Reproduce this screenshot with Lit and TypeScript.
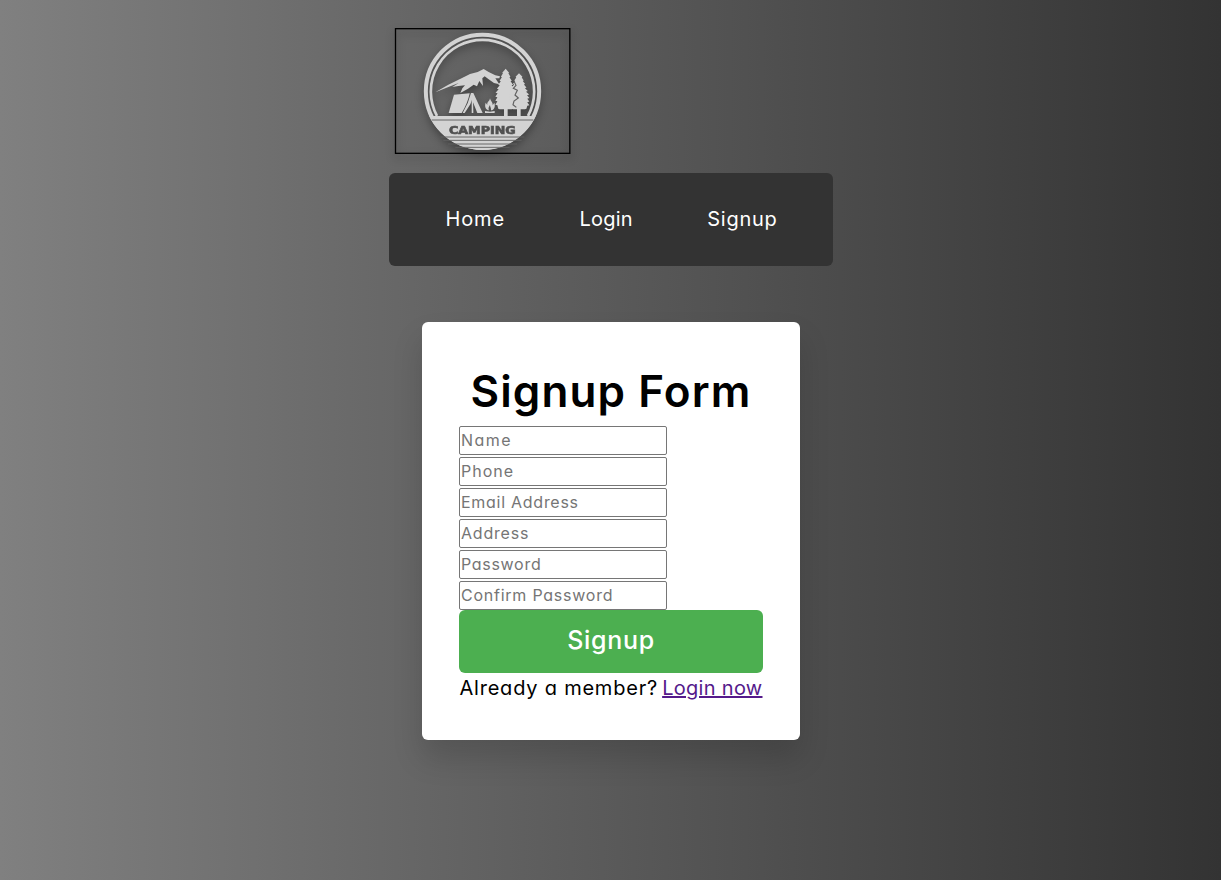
import { LitElement, html, css } from "lit";
import { customElement } from "lit/decorators.js";
import { styleMap } from "lit/directives/style-map.js";

@customElement("camp-logo")
class CampLogo extends LitElement {
  static styles = css`
    :host { display: block; width: 176px; height: 126px; }
    .art { display: block; width: 176px; height: 126px; overflow: visible; filter: drop-shadow(0 4px 4px rgba(0, 0, 0, 0.35)); }
    .word { font-family: "DejaVu Sans", sans-serif; font-weight: 700; font-size: 34px; }
  `;

  private pine(cx: number, top: number, half: number, bottom: number) {
    const tiers = 10;
    const step = (bottom - top) / tiers;
    const right: string[] = [];
    const left: string[] = [];
    for (let i = 1; i <= tiers; i++) {
      const f = Math.min(1, 0.2 + i * 0.13) * (i === tiers ? 0.72 : 1);
      const y = top + step * i;
      right.push(`L${cx + half * f} ${y}L${cx + half * f * 0.8} ${y + 2}`);
      left.unshift(`L${cx - half * f * 0.8} ${y + 2}L${cx - half * f} ${y}`);
    }
    return `M${cx} ${top}${right.join("")}${left.join("")}Z`;
  }

  render() {
    return html`<svg class="art" viewBox="45 39 528 378" role="img" aria-label="Camping">
      <defs>
        <clipPath id="base"><path d="M120 303H500V420H120Z" /></clipPath>
      </defs>
      <rect x="46.5" y="41" width="523" height="374" fill="none" stroke="#000" stroke-width="4" />
      <g fill="#d3d3d3">
        <circle cx="307.5" cy="229" r="170" fill="none" stroke="#d3d3d3" stroke-width="12" />
        <path d="M171 303A155 155 0 1 1 444 303" fill="none" stroke="#d3d3d3" stroke-width="8" />
        <circle cx="307.5" cy="229" r="176" clip-path="url(#base)" />
        <path d="M166 232L205 209L240 192L270 177L293 171L311 162L326 171L346 181L360 184L358 190L346 190L358 208L342 204L326 193L314 184L307 190L309 213L298 198L291 214L281 209L264 221L241 234L247 220L255 211L235 213L217 216L236 204L207 215Z" />
        <path d="M222 239L269 235Q263 266 245 294H206Z" />
        <path d="M273 234H280L308 294H292L276 254L271 268L254 294H248Q266 264 273 234Z" />
        <path d="M275 246H279L280 294H275Z" />
        <path d="M330 250C333 261 339 262 338 271L343 263C347 276 342 285 333 286C334 279 330 276 330 270C326 276 324 280 327 286C317 284 313 275 317 263L322 270C320 261 329 259 330 250Z" />
        <path d="M315 288L330 290L344 288V294H315Z" />
        <path d=${this.pine(377, 161, 31, 281)} />
        <path d=${this.pine(417, 175, 31, 281)} />
        <path d="M372 280H383V303H372ZM411 280H422V303H411Z" />
      </g>
      <path d="M402 199L408 211L400 220L412 226L405 240L415 249L402 258L399 269L409 277" fill="none" stroke="#606060" stroke-width="3.5" />
      <path d="M155 315H460M182 366H433M190 376H425M204 387H411M226 397H389" stroke="#606060" stroke-width="2.8" fill="none" />
      <text class="word" x="207" y="355.5" textLength="200" lengthAdjust="spacingAndGlyphs" fill="#505050" stroke="#505050" stroke-width="2">CAMPING</text>
    </svg>`;
  }
}

type Label = { text: string; track: number };

@customElement("app-root")
class AppRoot extends LitElement {
  static styles = css`
    :host {
      display: flex; flex-direction: column; align-items: center; box-sizing: border-box;
      height: 880px; padding-top: 28px;
      background: linear-gradient(to right, #808080, #333);
      font-family: Inter, sans-serif; font-feature-settings: "cv11"; font-size: 20px; color: #000;
    }
    .head { width: 444px; display: flex; flex-direction: column; gap: 19px; }
    .logo { margin-left: 6px; }
    .nav { display: flex; align-items: center; justify-content: center; gap: 74.5px; height: 93px; padding: 0 0 1px 2px; background: #333; border-radius: 6px; box-sizing: border-box; }
    .link { color: #fff; text-decoration: none; }
    .card { width: 378px; height: 418px; margin-top: 56px; padding: 37px; box-sizing: border-box; background: #fff; border-radius: 6px; box-shadow: 0 18px 30px rgba(0, 0, 0, 0.15); display: flex; flex-direction: column; }
    .title { margin: 0; height: 67px; line-height: 65px; text-align: center; text-indent: 1px; font-size: 44px; font-weight: 600; letter-spacing: 1.1px; white-space: nowrap; }
    .fields { display: flex; flex-direction: column; gap: 2px; align-items: flex-start; }
    .input { width: 208px; height: 29px; box-sizing: border-box; border: 1px solid #767676; border-radius: 2px; padding: 0 1px 2px 1.5px; font: inherit; font-feature-settings: "cv11"; font-size: 16px; }
    .input::placeholder { color: #757575; }
    .submit { height: 63px; flex: none; border: 0; border-radius: 6px; padding: 0 0 3px 1px; background: #4caf50; color: #fff; font: inherit; font-feature-settings: "cv11"; font-size: 25px; font-weight: 550; letter-spacing: 0.7px; }
    .foot { display: flex; justify-content: space-between; padding-left: 1px; line-height: 30px; white-space: nowrap; letter-spacing: 0.78px; }
    .now { color: #551a8b; letter-spacing: 0.3px; }
  `;

  private links: Label[] = [
    { text: "Home", track: 0.9 },
    { text: "Login", track: 0.2 },
    { text: "Signup", track: 0.75 },
  ];

  private fields: Label[] = [
    { text: "Name", track: 1.5 },
    { text: "Phone", track: 1 },
    { text: "Email Address", track: 0.73 },
    { text: "Address", track: 0.8 },
    { text: "Password", track: 0.7 },
    { text: "Confirm Password", track: 0.76 },
  ];

  render() {
    return html`
      <header class="head">
        <camp-logo class="logo"></camp-logo>
        <nav class="nav">
          ${this.links.map((l) => html`<a class="link" href="#" style=${styleMap({ letterSpacing: `${l.track}px` })}>${l.text}</a>`)}
        </nav>
      </header>
      <form class="card">
        <h1 class="title">Signup Form</h1>
        <div class="fields">
          ${this.fields.map((f) => html`<input class="input" placeholder=${f.text} style=${styleMap({ letterSpacing: `${f.track}px` })} />`)}
        </div>
        <button class="submit" type="button">Signup</button>
        <div class="foot"><span>Already a member?</span> <a class="now" href="#">Login now</a></div>
      </form>
    `;
  }
}
